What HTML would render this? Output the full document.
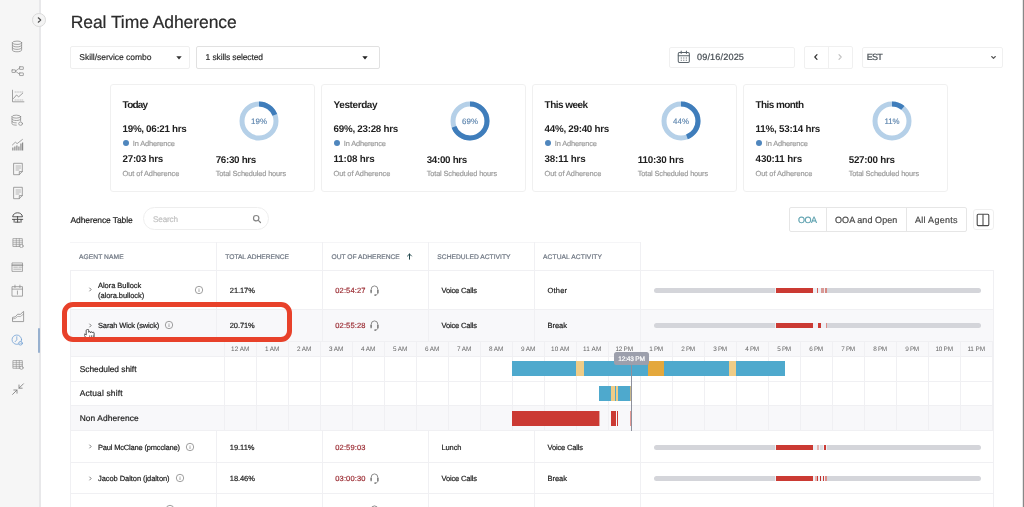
<!DOCTYPE html><html><head><meta charset="utf-8"><title>Real Time Adherence</title><style>
html,body{margin:0;padding:0;background:#fff;}
body{width:1024px;height:507px;overflow:hidden;position:relative;font-family:"Liberation Sans", Arial, sans-serif;text-rendering:geometricPrecision;}
#r{position:absolute;left:0;top:0;width:1024px;height:507px;overflow:hidden;will-change:transform;}
#r div,#r span,#r svg{position:absolute;box-sizing:border-box;}
#r span{white-space:nowrap;line-height:1;-webkit-text-stroke:0.2px;}
</style></head><body><div id="r">
<div style="left:0px;top:0px;width:40px;height:507px;background:#f6f6f6;"></div>
<div style="left:39px;top:0px;width:2px;height:507px;background:#e8e8ea;"></div>
<div style="left:38px;top:328px;width:2px;height:24.6px;background:#98b1cf;border-radius:1px;"></div>
<div style="left:32.2px;top:13px;width:13.6px;height:13.6px;border-radius:50%;background:#f4f4f4;border:0.7px solid #d9d9d9;"></div>
<svg style="left:36px;top:16px" width="7" height="8" viewBox="0 0 7 8"><path d="M2.300 1.800 L4.700 4 L2.300 6.200" fill="none" stroke="#4a4a4a" stroke-width="1.200" stroke-linecap="round" stroke-linejoin="round"/></svg>
<svg style="left:9.90px;top:40.36px" width="14.00" height="12.88" viewBox="0 0 14 14" preserveAspectRatio="none" fill="none" stroke="#8a8a8a" stroke-width="0.8" stroke-linecap="round" stroke-linejoin="round"><ellipse cx="7" cy="3" rx="4.6" ry="1.8"/><path d="M2.4 3v8c0 1 2 1.8 4.6 1.8s4.6-.8 4.6-1.8V3"/><path d="M2.4 5.7c0 1 2 1.8 4.6 1.8s4.6-.8 4.6-1.8M2.4 8.4c0 1 2 1.8 4.6 1.8s4.6-.8 4.6-1.8"/></svg>
<svg style="left:10.85px;top:64.84px" width="13.30" height="12.32" viewBox="0 0 14 14" preserveAspectRatio="none" fill="none" stroke="#8a8a8a" stroke-width="0.8" stroke-linecap="round" stroke-linejoin="round"><rect x="1" y="5.5" width="3.6" height="3" rx=".3"/><rect x="9" y="2" width="4" height="3" rx=".3"/><rect x="9" y="9" width="4" height="3" rx=".3"/><path d="M4.6 7 L9 3.5 M4.6 7 L9 10.5"/></svg>
<svg style="left:10.50px;top:88.60px" width="14.00" height="14.00" viewBox="0 0 14 14" preserveAspectRatio="none" fill="none" stroke="#8a8a8a" stroke-width="0.8" stroke-linecap="round" stroke-linejoin="round"><path d="M1.5 1.2v11.6h11.4"/><path d="M2.5 9.5l3-3.5 2.2 1.8 4-3.6"/><path d="M4 11h8M4 3h8" stroke-dasharray=".6 1.2" stroke-width=".5"/></svg>
<svg style="left:10.20px;top:114.14px" width="14.00" height="12.32" viewBox="0 0 14 14" preserveAspectRatio="none" fill="none" stroke="#8a8a8a" stroke-width="0.8" stroke-linecap="round" stroke-linejoin="round"><ellipse cx="6.3" cy="3" rx="4.3" ry="1.7"/><path d="M2 3v8c0 1 1.9 1.7 4.3 1.7M10.6 3v5"/><path d="M2 5.7c0 1 1.9 1.7 4.3 1.7s4.3-.7 4.3-1.7M2 8.4c0 1 1.9 1.7 4.3 1.7"/><circle cx="10.6" cy="11" r="1.9"/></svg>
<svg style="left:10.86px;top:137.60px" width="12.88" height="14.00" viewBox="0 0 14 14" preserveAspectRatio="none" fill="none" stroke="#8a8a8a" stroke-width="0.8" stroke-linecap="round" stroke-linejoin="round"><path d="M2 12.5v-3M4.2 12.5v-4M6.4 12.5v-5M8.6 12.5v-4M10.8 12.5v-7M12.6 12.5v-8" stroke-width="1.3" stroke-linecap="butt"/><path d="M1.5 7l3.2-2.8 2 1.4 5.8-4.2"/></svg>
<svg style="left:10.50px;top:162.20px" width="14.00" height="14.00" viewBox="0 0 14 14" preserveAspectRatio="none" fill="none" stroke="#8a8a8a" stroke-width="0.8" stroke-linecap="round" stroke-linejoin="round"><path d="M3 1.3h8.3v8.2l-3 3.2H3z"/><path d="M8.3 12.5V9.6h3"/><path d="M5 4h4.5M5 6h4.5M5 8h3" stroke-width=".6"/></svg>
<svg style="left:10.50px;top:186.30px" width="14.00" height="14.00" viewBox="0 0 14 14" preserveAspectRatio="none" fill="none" stroke="#8a8a8a" stroke-width="0.8" stroke-linecap="round" stroke-linejoin="round"><path d="M3 1.3h8.3v8.2l-3 3.2H3z"/><path d="M8.3 12.5V9.6h3"/><path d="M5 4h4.5M5 6h4.5M5 8h3" stroke-width=".6"/></svg>
<svg style="left:10.62px;top:211.30px" width="13.16" height="12.60" viewBox="0 0 14 14" preserveAspectRatio="none" fill="none" stroke="#4a4a4a" stroke-width="1.0" stroke-linecap="round" stroke-linejoin="round"><path d="M1.8 6c.4-2.6 2.6-4 5.2-4s4.8 1.4 5.2 4z"/><path d="M7 6v6.3M1.5 9.3h11M3.3 9.3v3.2M10.7 9.3v3.2M4.5 12.4h5"/></svg>
<svg style="left:11.78px;top:236.56px" width="12.04" height="11.48" viewBox="0 0 14 14" preserveAspectRatio="none" fill="none" stroke="#8a8a8a" stroke-width="0.8" stroke-linecap="round" stroke-linejoin="round"><rect x="1.5" y="2" width="10.5" height="9.6"/><path d="M1.5 4.6h10.5M1.5 7h10.5M1.5 9.3h10.5M5 2v9.6M8.5 2v9.6" stroke-width=".7"/><circle cx="11" cy="11" r="2" fill="#f6f6f6"/></svg>
<svg style="left:11.06px;top:260.64px" width="12.88" height="12.32" viewBox="0 0 14 14" preserveAspectRatio="none" fill="none" stroke="#8a8a8a" stroke-width="0.8" stroke-linecap="round" stroke-linejoin="round"><rect x="1.5" y="2.2" width="11" height="9.6"/><path d="M1.5 4.7h11" stroke-width="1.6"/><path d="M3 7h4M3 9.3h8" stroke-width=".7"/><path d="M8.5 7h3" stroke-width=".7"/></svg>
<svg style="left:11.06px;top:283.75px" width="12.88" height="13.30" viewBox="0 0 14 14" preserveAspectRatio="none" fill="none" stroke="#8a8a8a" stroke-width="0.8" stroke-linecap="round" stroke-linejoin="round"><rect x="1.5" y="2.8" width="11" height="10"/><path d="M1.5 5.4h11M4.3 1.2v2.6M9.7 1.2v2.6M7 7.3v3.5"/></svg>
<svg style="left:10.50px;top:309.00px" width="14.00" height="14.00" viewBox="0 0 14 14" preserveAspectRatio="none" fill="none" stroke="#8a8a8a" stroke-width="0.8" stroke-linecap="round" stroke-linejoin="round"><path d="M1.5 12.2V8.4l2.8-.6 2.4-2.6 2.6.2 3.3-3v9.8z"/><path d="M1.5 10l2.8-.6 2.4-2 2.6.2 3.3-2.6" stroke-width=".6"/></svg>
<svg style="left:11.34px;top:334.38px" width="12.32" height="12.04" viewBox="0 0 14 14" preserveAspectRatio="none" fill="none" stroke="#6f9fd3" stroke-width="0.9" stroke-linecap="round" stroke-linejoin="round"><circle cx="6.6" cy="6.6" r="5.4"/><path d="M6.6 3.2v3.6L4.6 9"/><circle cx="10.8" cy="10.8" r="2.1" fill="#f6f6f6"/><path d="M10 10.8h1.6" stroke-width=".6"/></svg>
<svg style="left:11.78px;top:359.10px" width="12.04" height="11.20" viewBox="0 0 14 14" preserveAspectRatio="none" fill="none" stroke="#8a8a8a" stroke-width="0.8" stroke-linecap="round" stroke-linejoin="round"><rect x="1.5" y="2" width="10.5" height="9.6"/><path d="M1.5 4.6h10.5M1.5 7h10.5M1.5 9.3h10.5M5 2v9.6M8.5 2v9.6" stroke-width=".7"/><circle cx="11" cy="11" r="2" fill="#f6f6f6"/></svg>
<svg style="left:10.50px;top:382.30px" width="14.00" height="14.00" viewBox="0 0 14 14" preserveAspectRatio="none" fill="none" stroke="#777" stroke-width="0.8" stroke-linecap="round" stroke-linejoin="round"><path d="M12.4 1.8L8 6.2M8 3v3.2h3.2M1.6 12.4L6 8M6 11.2V8H2.8"/></svg>
<div style="left:70px;top:45.5px;width:120px;height:23px;border:1px solid #efefef;border-radius:2px;background:#fff;"></div>
<svg style="left:176px;top:55.5px" width="6" height="4" viewBox="0 0 6 4"><path d="M0.3 0.3h5.4L3 3.5z" fill="#333"/></svg>
<div style="left:196px;top:45.5px;width:184px;height:23px;border:1px solid #e1e1e1;border-radius:2px;background:#fff;"></div>
<svg style="left:361.5px;top:56px" width="6" height="4" viewBox="0 0 6 4"><path d="M0.3 0.3h5.4L3 3.5z" fill="#222"/></svg>
<div style="left:669px;top:47px;width:125.5px;height:20.5px;border:1px solid #f0f0f0;border-radius:2px;background:#fff;"></div>
<svg style="left:676.8px;top:50.4px" width="13.6" height="13.8" viewBox="0 0 13 14" preserveAspectRatio="none" fill="none" stroke="#5a646b" stroke-width="1" stroke-linejoin="round"><rect x="1.2" y="2.6" width="10.6" height="10" rx="1.2"/><path d="M1.2 5.8h10.6M4 1v2.6M9 1v2.6" stroke-linecap="round"/><path d="M3.6 8.2h1M6 8.2h1M8.4 8.2h1M3.6 10.4h1M6 10.4h1M8.4 10.4h1" stroke-width="1"/></svg>
<div style="left:804px;top:46px;width:48.5px;height:22.5px;border:1px solid #f0f0f0;border-radius:2px;background:#fff;"></div>
<div style="left:828px;top:46px;width:1px;height:22.5px;background:#f0f0f0;"></div>
<svg style="left:813px;top:53.2px" width="6" height="8" viewBox="0 0 6 8"><path d="M4 1.6L1.8 4l2.2 2.4" fill="none" stroke="#333" stroke-width="1.2" stroke-linecap="round" stroke-linejoin="round"/></svg>
<svg style="left:837px;top:53.2px" width="6" height="8" viewBox="0 0 6 8"><path d="M2 1.6L4.2 4 2 6.400" fill="none" stroke="#c4c4c4" stroke-width="1.2" stroke-linecap="round" stroke-linejoin="round"/></svg>
<div style="left:862px;top:47px;width:141px;height:20.5px;border:1px solid #f0f0f0;border-radius:2px;background:#fff;"></div>
<svg style="left:989.5px;top:55px" width="7" height="5" viewBox="0 0 7 5"><path d="M1.700 1.500L3.5 3.300 5.300 1.500" fill="none" stroke="#555" stroke-width="1.1" stroke-linecap="round" stroke-linejoin="round"/></svg>
<div style="left:110px;top:84px;width:205px;height:107.6px;border:1px solid #f0f0f0;border-radius:3px;background:#fff;"></div>
<div style="left:122.89999999999999px;top:140px;width:6px;height:6px;border-radius:50%;background:#4f86bd;"></div>
<svg style="left:239.2px;top:101.1px" width="40" height="40" viewBox="-20 -20 40 40"><circle r="17" fill="none" stroke="#b5d0e8" stroke-width="5"/><circle r="17" fill="none" stroke="#3f7dbb" stroke-width="5" stroke-dasharray="20.29 106.81" transform="rotate(-90)"/><text x="0" y="2.7" text-anchor="middle" font-family="Liberation Sans, Arial, sans-serif" font-size="7.9" stroke="#5c84ad" stroke-width="0.15" fill="#5c84ad">19%</text></svg>
<div style="left:321px;top:84px;width:205px;height:107.6px;border:1px solid #f0f0f0;border-radius:3px;background:#fff;"></div>
<div style="left:333.90000000000003px;top:140px;width:6px;height:6px;border-radius:50%;background:#4f86bd;"></div>
<svg style="left:450.2px;top:101.1px" width="40" height="40" viewBox="-20 -20 40 40"><circle r="17" fill="none" stroke="#b5d0e8" stroke-width="5"/><circle r="17" fill="none" stroke="#3f7dbb" stroke-width="5" stroke-dasharray="73.70 106.81" transform="rotate(-90)"/><text x="0" y="2.7" text-anchor="middle" font-family="Liberation Sans, Arial, sans-serif" font-size="7.9" stroke="#5c84ad" stroke-width="0.15" fill="#5c84ad">69%</text></svg>
<div style="left:532px;top:84px;width:205px;height:107.6px;border:1px solid #f0f0f0;border-radius:3px;background:#fff;"></div>
<div style="left:544.9px;top:140px;width:6px;height:6px;border-radius:50%;background:#4f86bd;"></div>
<svg style="left:661.2px;top:101.1px" width="40" height="40" viewBox="-20 -20 40 40"><circle r="17" fill="none" stroke="#b5d0e8" stroke-width="5"/><circle r="17" fill="none" stroke="#3f7dbb" stroke-width="5" stroke-dasharray="47.00 106.81" transform="rotate(-90)"/><text x="0" y="2.7" text-anchor="middle" font-family="Liberation Sans, Arial, sans-serif" font-size="7.9" stroke="#5c84ad" stroke-width="0.15" fill="#5c84ad">44%</text></svg>
<div style="left:743px;top:84px;width:205px;height:107.6px;border:1px solid #f0f0f0;border-radius:3px;background:#fff;"></div>
<div style="left:755.9px;top:140px;width:6px;height:6px;border-radius:50%;background:#4f86bd;"></div>
<svg style="left:872.2px;top:101.1px" width="40" height="40" viewBox="-20 -20 40 40"><circle r="17" fill="none" stroke="#b5d0e8" stroke-width="5"/><circle r="17" fill="none" stroke="#3f7dbb" stroke-width="5" stroke-dasharray="11.75 106.81" transform="rotate(-90)"/><text x="0" y="2.7" text-anchor="middle" font-family="Liberation Sans, Arial, sans-serif" font-size="7.9" stroke="#5c84ad" stroke-width="0.15" fill="#5c84ad">11%</text></svg>
<div style="left:143.4px;top:207px;width:125.4px;height:23px;border:1px solid #eeeeee;border-radius:11.4px;background:#fff;"></div>
<svg style="left:251.5px;top:213.5px" width="10" height="10" viewBox="0 0 10 10" fill="none" stroke="#858585" stroke-width="1.200" stroke-linecap="round"><circle cx="4.200" cy="4.200" r="2.700"/><path d="M6.300 6.300L8.500 8.500"/></svg>
<div style="left:789.4px;top:207px;width:177.4px;height:25px;border:1px solid #e6e6e6;border-radius:2px;background:#fff;"></div>
<div style="left:826px;top:207px;width:1px;height:25px;background:#e6e6e6;"></div>
<div style="left:906.2px;top:207px;width:1px;height:25px;background:#e6e6e6;"></div>
<div style="left:972.5px;top:208.5px;width:21px;height:21.2px;border:1px solid #efefef;border-radius:3px;background:#fff;"></div>
<svg style="left:976px;top:212.5px" width="14" height="14" viewBox="0 0 14 14" fill="none" stroke="#4a4a4a" stroke-width="1.1"><rect x="1.2" y="1.2" width="11.6" height="11.4" rx="1"/><path d="M7 1.2v11.4"/></svg>
<div style="left:70px;top:241.5px;width:570.5px;height:1px;background:#f5f5f7;"></div>
<div style="left:70px;top:308.7px;width:923.5px;height:32.2px;background:#f8f8fa;"></div>
<div style="left:70px;top:341px;width:923.5px;height:15.5px;background:#f8f8fa;"></div>
<div style="left:70px;top:405.3px;width:923.5px;height:25.3px;background:#f8f8fa;"></div>
<div style="left:70px;top:269.7px;width:923.5px;height:1px;background:#f0f0f3;"></div>
<div style="left:70px;top:308.5px;width:923.5px;height:1px;background:#f0f0f3;"></div>
<div style="left:70px;top:340.7px;width:923.5px;height:1px;background:#f0f0f3;"></div>
<div style="left:70px;top:356.2px;width:923.5px;height:1px;background:#f0f0f3;"></div>
<div style="left:70px;top:380.5px;width:923.5px;height:1px;background:#f0f0f3;"></div>
<div style="left:70px;top:405.1px;width:923.5px;height:1px;background:#f0f0f3;"></div>
<div style="left:70px;top:430.4px;width:923.5px;height:1px;background:#f0f0f3;"></div>
<div style="left:70px;top:462px;width:923.5px;height:1px;background:#f0f0f3;"></div>
<div style="left:70px;top:493.3px;width:923.5px;height:1px;background:#f0f0f3;"></div>
<div style="left:70px;top:270px;width:1px;height:237px;background:#f0f0f3;"></div>
<div style="left:993.0px;top:270px;width:1px;height:237px;background:#f0f0f3;"></div>
<div style="left:216.0px;top:242px;width:1px;height:99px;background:#f0f0f3;"></div>
<div style="left:216.0px;top:431px;width:1px;height:76px;background:#f0f0f3;"></div>
<div style="left:322.0px;top:242px;width:1px;height:99px;background:#f0f0f3;"></div>
<div style="left:322.0px;top:431px;width:1px;height:76px;background:#f0f0f3;"></div>
<div style="left:428.0px;top:242px;width:1px;height:99px;background:#f0f0f3;"></div>
<div style="left:428.0px;top:431px;width:1px;height:76px;background:#f0f0f3;"></div>
<div style="left:534.0px;top:242px;width:1px;height:99px;background:#f0f0f3;"></div>
<div style="left:534.0px;top:431px;width:1px;height:76px;background:#f0f0f3;"></div>
<div style="left:640.0px;top:242px;width:1px;height:99px;background:#f0f0f3;"></div>
<div style="left:640.0px;top:431px;width:1px;height:76px;background:#f0f0f3;"></div>
<div style="left:223.5px;top:341px;width:1px;height:89.5px;background:#f0f0f3;"></div>
<div style="left:255.5px;top:341px;width:1px;height:89.5px;background:#f0f0f3;"></div>
<div style="left:287.5px;top:341px;width:1px;height:89.5px;background:#f0f0f3;"></div>
<div style="left:319.5px;top:341px;width:1px;height:89.5px;background:#f0f0f3;"></div>
<div style="left:351.5px;top:341px;width:1px;height:89.5px;background:#f0f0f3;"></div>
<div style="left:383.5px;top:341px;width:1px;height:89.5px;background:#f0f0f3;"></div>
<div style="left:415.5px;top:341px;width:1px;height:89.5px;background:#f0f0f3;"></div>
<div style="left:447.5px;top:341px;width:1px;height:89.5px;background:#f0f0f3;"></div>
<div style="left:479.5px;top:341px;width:1px;height:89.5px;background:#f0f0f3;"></div>
<div style="left:511.5px;top:341px;width:1px;height:89.5px;background:#f0f0f3;"></div>
<div style="left:543.5px;top:341px;width:1px;height:89.5px;background:#f0f0f3;"></div>
<div style="left:575.5px;top:341px;width:1px;height:89.5px;background:#f0f0f3;"></div>
<div style="left:607.5px;top:341px;width:1px;height:89.5px;background:#f0f0f3;"></div>
<div style="left:639.5px;top:341px;width:1px;height:89.5px;background:#f0f0f3;"></div>
<div style="left:671.5px;top:341px;width:1px;height:89.5px;background:#f0f0f3;"></div>
<div style="left:703.5px;top:341px;width:1px;height:89.5px;background:#f0f0f3;"></div>
<div style="left:735.5px;top:341px;width:1px;height:89.5px;background:#f0f0f3;"></div>
<div style="left:767.5px;top:341px;width:1px;height:89.5px;background:#f0f0f3;"></div>
<div style="left:799.5px;top:341px;width:1px;height:89.5px;background:#f0f0f3;"></div>
<div style="left:831.5px;top:341px;width:1px;height:89.5px;background:#f0f0f3;"></div>
<div style="left:863.5px;top:341px;width:1px;height:89.5px;background:#f0f0f3;"></div>
<div style="left:895.5px;top:341px;width:1px;height:89.5px;background:#f0f0f3;"></div>
<div style="left:927.5px;top:341px;width:1px;height:89.5px;background:#f0f0f3;"></div>
<div style="left:959.5px;top:341px;width:1px;height:89.5px;background:#f0f0f3;"></div>
<div style="left:991.5px;top:341px;width:1px;height:89.5px;background:#f0f0f3;"></div>
<svg style="left:406px;top:253px" width="7" height="7" viewBox="0 0 7 7" fill="none" stroke="#23484d" stroke-width="1" stroke-linecap="round" stroke-linejoin="round"><path d="M3.5 6.2V1M1.5 3L3.5 1l2 2"/></svg>
<svg style="left:87.89999999999999px;top:286.4px" width="5" height="7" viewBox="0 0 5 7"><path d="M1.700 2L3.100 3.500 1.700 5" fill="none" stroke="#7c7c7c" stroke-width="1" stroke-linecap="round" stroke-linejoin="round"/></svg>
<svg style="left:194px;top:284.9px" width="10" height="10" viewBox="0 0 10 10" fill="none" stroke="#808080" stroke-width=".75"><circle cx="5" cy="5" r="3.7"/><path d="M5 4.6v2" stroke-linecap="round" stroke-width=".7"/><circle cx="5" cy="3.3" r=".35" fill="#808080" stroke="none"/></svg>
<svg style="left:368.9px;top:285.1px" width="11" height="11" viewBox="0 0 11 11" fill="none" stroke="#6a6a6a" stroke-width=".75" stroke-linecap="round"><path d="M2.1 6.3V4.800a3.400 3.900 0 0 1 6.800 0v1.500"/><path d="M2.1 5.400v2.300M8.900 5.400v2.300" stroke-width="1.200"/><path d="M8.900 7.700c0 1.400-.9 2.300-2.500 2.400"/><path d="M5.600 10.100h1.100" stroke-width="1"/></svg>
<div style="left:653.5px;top:287.6px;width:327px;height:5px;background:#d4d5da;border-radius:2.5px;"></div>
<div style="left:774.9px;top:287.6px;width:52.39999999999998px;height:5px;background:#eef0f5;"></div>
<div style="left:775.9px;top:287.6px;width:37.39999999999998px;height:5px;background:#cb3a33;"></div>
<div style="left:816.6px;top:287.6px;width:1.3999999999999773px;height:5px;background:#d4625c;"></div>
<div style="left:820.9px;top:287.6px;width:2.7000000000000455px;height:5px;background:#d99b97;"></div>
<div style="left:825px;top:287.6px;width:1.8999999999999773px;height:5px;background:#d68781;"></div>
<svg style="left:87.89999999999999px;top:321.59999999999997px" width="5" height="7" viewBox="0 0 5 7"><path d="M1.700 2L3.100 3.500 1.700 5" fill="none" stroke="#7c7c7c" stroke-width="1" stroke-linecap="round" stroke-linejoin="round"/></svg>
<svg style="left:164px;top:320.09999999999997px" width="10" height="10" viewBox="0 0 10 10" fill="none" stroke="#808080" stroke-width=".75"><circle cx="5" cy="5" r="3.7"/><path d="M5 4.6v2" stroke-linecap="round" stroke-width=".7"/><circle cx="5" cy="3.3" r=".35" fill="#808080" stroke="none"/></svg>
<svg style="left:368.9px;top:320.3px" width="11" height="11" viewBox="0 0 11 11" fill="none" stroke="#6a6a6a" stroke-width=".75" stroke-linecap="round"><path d="M2.1 6.3V4.800a3.400 3.900 0 0 1 6.800 0v1.500"/><path d="M2.1 5.400v2.300M8.900 5.400v2.300" stroke-width="1.200"/><path d="M8.900 7.700c0 1.400-.9 2.300-2.500 2.400"/><path d="M5.600 10.100h1.100" stroke-width="1"/></svg>
<div style="left:653.5px;top:322.8px;width:327px;height:5px;background:#d4d5da;border-radius:2.5px;"></div>
<div style="left:774.9px;top:322.8px;width:52.39999999999998px;height:5px;background:#eef0f5;"></div>
<div style="left:775.9px;top:322.8px;width:37.39999999999998px;height:5px;background:#cb3a33;"></div>
<div style="left:817.9px;top:322.8px;width:3.0px;height:5px;background:#cb3a33;"></div>
<div style="left:825.8px;top:322.8px;width:0.900000000000091px;height:5px;background:#dd8f8a;"></div>
<svg style="left:87.89999999999999px;top:443.29999999999995px" width="5" height="7" viewBox="0 0 5 7"><path d="M1.700 2L3.100 3.500 1.700 5" fill="none" stroke="#7c7c7c" stroke-width="1" stroke-linecap="round" stroke-linejoin="round"/></svg>
<svg style="left:185px;top:441.79999999999995px" width="10" height="10" viewBox="0 0 10 10" fill="none" stroke="#808080" stroke-width=".75"><circle cx="5" cy="5" r="3.7"/><path d="M5 4.6v2" stroke-linecap="round" stroke-width=".7"/><circle cx="5" cy="3.3" r=".35" fill="#808080" stroke="none"/></svg>
<div style="left:653.5px;top:444.5px;width:327px;height:5px;background:#d4d5da;border-radius:2.5px;"></div>
<div style="left:774.9px;top:444.5px;width:52.39999999999998px;height:5px;background:#eef0f5;"></div>
<div style="left:775.9px;top:444.5px;width:37.39999999999998px;height:5px;background:#cb3a33;"></div>
<div style="left:817.1px;top:444.5px;width:1.6999999999999318px;height:5px;background:#e6b5b2;"></div>
<div style="left:819.5px;top:444.5px;width:3.1000000000000227px;height:5px;background:#dcdde2;"></div>
<div style="left:823.6px;top:444.5px;width:2.699999999999932px;height:5px;background:#cb3a33;"></div>
<svg style="left:87.89999999999999px;top:474.59999999999997px" width="5" height="7" viewBox="0 0 5 7"><path d="M1.700 2L3.100 3.500 1.700 5" fill="none" stroke="#7c7c7c" stroke-width="1" stroke-linecap="round" stroke-linejoin="round"/></svg>
<svg style="left:174.6px;top:473.09999999999997px" width="10" height="10" viewBox="0 0 10 10" fill="none" stroke="#808080" stroke-width=".75"><circle cx="5" cy="5" r="3.7"/><path d="M5 4.6v2" stroke-linecap="round" stroke-width=".7"/><circle cx="5" cy="3.3" r=".35" fill="#808080" stroke="none"/></svg>
<svg style="left:368.9px;top:473.3px" width="11" height="11" viewBox="0 0 11 11" fill="none" stroke="#6a6a6a" stroke-width=".75" stroke-linecap="round"><path d="M2.1 6.3V4.800a3.400 3.900 0 0 1 6.800 0v1.500"/><path d="M2.1 5.400v2.300M8.900 5.400v2.300" stroke-width="1.200"/><path d="M8.900 7.700c0 1.400-.9 2.300-2.500 2.400"/><path d="M5.600 10.100h1.100" stroke-width="1"/></svg>
<div style="left:653.5px;top:475.8px;width:327px;height:5px;background:#d4d5da;border-radius:2.5px;"></div>
<div style="left:774.9px;top:475.8px;width:52.39999999999998px;height:5px;background:#eef0f5;"></div>
<div style="left:775.9px;top:475.8px;width:37.30000000000007px;height:5px;background:#cb3a33;"></div>
<div style="left:815.2px;top:475.8px;width:1.3999999999999773px;height:5px;background:#e6b5b2;"></div>
<div style="left:816.9px;top:475.8px;width:1.3000000000000682px;height:5px;background:#cb3a33;"></div>
<div style="left:819.6px;top:475.8px;width:1.5px;height:5px;background:#b8322c;"></div>
<div style="left:823.1px;top:475.8px;width:0.8999999999999773px;height:5px;background:#cb3a33;"></div>
<div style="left:825px;top:475.8px;width:1.7000000000000455px;height:5px;background:#dd8f8a;"></div>
<svg style="left:87.89999999999999px;top:505.9px" width="5" height="7" viewBox="0 0 5 7"><path d="M1.700 2L3.100 3.500 1.700 5" fill="none" stroke="#7c7c7c" stroke-width="1" stroke-linecap="round" stroke-linejoin="round"/></svg>
<svg style="left:165px;top:504.4px" width="10" height="10" viewBox="0 0 10 10" fill="none" stroke="#808080" stroke-width=".75"><circle cx="5" cy="5" r="3.7"/><path d="M5 4.6v2" stroke-linecap="round" stroke-width=".7"/><circle cx="5" cy="3.3" r=".35" fill="#808080" stroke="none"/></svg>
<svg style="left:368.9px;top:504.5px" width="11" height="11" viewBox="0 0 11 11" fill="none" stroke="#6a6a6a" stroke-width=".75" stroke-linecap="round"><path d="M2.1 6.3V4.800a3.400 3.900 0 0 1 6.800 0v1.500"/><path d="M2.1 5.400v2.300M8.900 5.400v2.300" stroke-width="1.200"/><path d="M8.900 7.700c0 1.400-.9 2.300-2.500 2.400"/><path d="M5.600 10.100h1.100" stroke-width="1"/></svg>
<div style="left:512.3px;top:361.2px;width:272.70000000000005px;height:14.5px;background:#4ea9cd;"></div>
<div style="left:576.3px;top:361.2px;width:8.100000000000023px;height:14.5px;background:#efcc86;"></div>
<div style="left:648px;top:361.2px;width:16.200000000000045px;height:14.5px;background:#e4a83c;"></div>
<div style="left:728.6px;top:361.2px;width:7.699999999999932px;height:14.5px;background:#efcc86;"></div>
<div style="left:598.8px;top:386px;width:31.800000000000068px;height:15px;background:#4ea9cd;"></div>
<div style="left:611.1px;top:386px;width:3.699999999999932px;height:15px;background:#efcc86;"></div>
<div style="left:616px;top:386px;width:2px;height:15px;background:#efcc86;"></div>
<div style="left:630px;top:386px;width:1px;height:15px;background:#c9b98c;"></div>
<div style="left:512.3px;top:410.7px;width:86.40000000000009px;height:15px;background:#cb3a33;"></div>
<div style="left:598.7px;top:410.7px;width:0.7999999999999545px;height:15px;background:#e3a9a5;"></div>
<div style="left:611.1px;top:410.7px;width:4.5px;height:15px;background:#cb3a33;"></div>
<div style="left:617px;top:410.7px;width:1.3999999999999773px;height:15px;background:#cb3a33;"></div>
<div style="left:629.6px;top:410.7px;width:1.3999999999999773px;height:15px;background:#e59a95;"></div>
<div style="left:631px;top:364px;width:1px;height:66.5px;background:#8d909c;"></div>
<div style="left:613.7px;top:352.2px;width:35.6px;height:12.8px;background:#9c9fac;border-radius:2.5px;"></div>
<span id="t0" style="left:70.7px;top:14.00px;font-size:17.5px;font-weight:400;color:#2b2b2b;letter-spacing:-0.068px;">Real Time Adherence</span>
<span id="t1" style="left:79.3px;top:53.00px;font-size:8.5px;font-weight:400;color:#2f2f2f;letter-spacing:-0.031px;">Skill/service combo</span>
<span id="t2" style="left:205.6px;top:53.00px;font-size:8.5px;font-weight:400;color:#2f2f2f;letter-spacing:-0.133px;">1 skills selected</span>
<span id="t3" style="left:697px;top:53.00px;font-size:9.1px;font-weight:400;color:#454c52;letter-spacing:0.154px;">09/16/2025</span>
<span id="t4" style="left:866.7px;top:53.00px;font-size:9.1px;font-weight:400;color:#454c52;letter-spacing:-0.794px;">EST</span>
<span id="t5" style="left:122.6px;top:101.00px;font-size:10px;font-weight:700;color:#1f1f1f;letter-spacing:-0.780px;-webkit-text-stroke:0;">Today</span>
<span id="t6" style="left:122.6px;top:125.00px;font-size:9.8px;font-weight:700;color:#1f1f1f;letter-spacing:-0.306px;-webkit-text-stroke:0;">19%, 06:21 hrs</span>
<span id="t7" style="left:132.79999999999998px;top:140.00px;font-size:7.4px;font-weight:400;color:#9c9c9c;letter-spacing:-0.133px;">In Adherence</span>
<span id="t8" style="left:122.6px;top:155.00px;font-size:9.8px;font-weight:700;color:#1f1f1f;letter-spacing:-0.304px;-webkit-text-stroke:0;">27:03 hrs</span>
<span id="t9" style="left:122.6px;top:170.00px;font-size:7.4px;font-weight:400;color:#9c9c9c;letter-spacing:-0.055px;">Out of Adherence</span>
<span id="t10" style="left:215.7px;top:156.00px;font-size:9.8px;font-weight:700;color:#1f1f1f;letter-spacing:-0.304px;-webkit-text-stroke:0;">76:30 hrs</span>
<span id="t11" style="left:215.7px;top:170.00px;font-size:7.4px;font-weight:400;color:#9c9c9c;letter-spacing:-0.137px;">Total Scheduled hours</span>
<span id="t12" style="left:333.6px;top:101.00px;font-size:10px;font-weight:700;color:#1f1f1f;letter-spacing:-0.408px;-webkit-text-stroke:0;">Yesterday</span>
<span id="t13" style="left:333.6px;top:125.00px;font-size:9.8px;font-weight:700;color:#1f1f1f;letter-spacing:-0.268px;-webkit-text-stroke:0;">69%, 23:28 hrs</span>
<span id="t14" style="left:343.8px;top:140.00px;font-size:7.4px;font-weight:400;color:#9c9c9c;letter-spacing:-0.133px;">In Adherence</span>
<span id="t15" style="left:333.6px;top:155.00px;font-size:9.8px;font-weight:700;color:#1f1f1f;letter-spacing:-0.186px;-webkit-text-stroke:0;">11:08 hrs</span>
<span id="t16" style="left:333.6px;top:170.00px;font-size:7.4px;font-weight:400;color:#9c9c9c;letter-spacing:-0.055px;">Out of Adherence</span>
<span id="t17" style="left:426.7px;top:156.00px;font-size:9.8px;font-weight:700;color:#1f1f1f;letter-spacing:-0.304px;-webkit-text-stroke:0;">34:00 hrs</span>
<span id="t18" style="left:426.7px;top:170.00px;font-size:7.4px;font-weight:400;color:#9c9c9c;letter-spacing:-0.137px;">Total Scheduled hours</span>
<span id="t19" style="left:544.6px;top:101.00px;font-size:10px;font-weight:700;color:#1f1f1f;letter-spacing:-0.527px;-webkit-text-stroke:0;">This week</span>
<span id="t20" style="left:544.6px;top:125.00px;font-size:9.8px;font-weight:700;color:#1f1f1f;letter-spacing:-0.268px;-webkit-text-stroke:0;">44%, 29:40 hrs</span>
<span id="t21" style="left:554.8000000000001px;top:140.00px;font-size:7.4px;font-weight:400;color:#9c9c9c;letter-spacing:-0.133px;">In Adherence</span>
<span id="t22" style="left:544.6px;top:155.00px;font-size:9.8px;font-weight:700;color:#1f1f1f;letter-spacing:-0.186px;-webkit-text-stroke:0;">38:11 hrs</span>
<span id="t23" style="left:544.6px;top:170.00px;font-size:7.4px;font-weight:400;color:#9c9c9c;letter-spacing:-0.055px;">Out of Adherence</span>
<span id="t24" style="left:637.7px;top:156.00px;font-size:9.8px;font-weight:700;color:#1f1f1f;letter-spacing:-0.182px;-webkit-text-stroke:0;">110:30 hrs</span>
<span id="t25" style="left:637.7px;top:170.00px;font-size:7.4px;font-weight:400;color:#9c9c9c;letter-spacing:-0.137px;">Total Scheduled hours</span>
<span id="t26" style="left:755.6px;top:101.00px;font-size:10px;font-weight:700;color:#1f1f1f;letter-spacing:-0.599px;-webkit-text-stroke:0;">This month</span>
<span id="t27" style="left:755.6px;top:125.00px;font-size:9.8px;font-weight:700;color:#1f1f1f;letter-spacing:-0.227px;-webkit-text-stroke:0;">11%, 53:14 hrs</span>
<span id="t28" style="left:765.8000000000001px;top:140.00px;font-size:7.4px;font-weight:400;color:#9c9c9c;letter-spacing:-0.133px;">In Adherence</span>
<span id="t29" style="left:755.6px;top:155.00px;font-size:9.8px;font-weight:700;color:#1f1f1f;letter-spacing:-0.160px;-webkit-text-stroke:0;">430:11 hrs</span>
<span id="t30" style="left:755.6px;top:170.00px;font-size:7.4px;font-weight:400;color:#9c9c9c;letter-spacing:-0.055px;">Out of Adherence</span>
<span id="t31" style="left:848.7px;top:156.00px;font-size:9.8px;font-weight:700;color:#1f1f1f;letter-spacing:-0.243px;-webkit-text-stroke:0;">527:00 hrs</span>
<span id="t32" style="left:848.7px;top:170.00px;font-size:7.4px;font-weight:400;color:#9c9c9c;letter-spacing:-0.137px;">Total Scheduled hours</span>
<span id="t33" style="left:70.5px;top:216.00px;font-size:8.5px;font-weight:400;color:#222;letter-spacing:-0.104px;">Adherence Table</span>
<span id="t34" style="left:153px;top:216.00px;font-size:8.2px;font-weight:400;color:#c2c2c2;letter-spacing:-0.191px;">Search</span>
<span id="t35" style="left:798px;top:216.00px;font-size:9px;font-weight:400;color:#5a9fad;letter-spacing:-0.508px;">OOA</span>
<span id="t36" style="left:835px;top:216.00px;font-size:9px;font-weight:400;color:#484848;letter-spacing:0.068px;">OOA and Open</span>
<span id="t37" style="left:915px;top:216.00px;font-size:9px;font-weight:400;color:#484848;letter-spacing:0.274px;">All Agents</span>
<span id="t38" style="left:79px;top:255.00px;font-size:6.7px;font-weight:400;color:#6f7783;letter-spacing:0.055px;">AGENT NAME</span>
<span id="t39" style="left:225.3px;top:255.00px;font-size:6.7px;font-weight:400;color:#6f7783;letter-spacing:-0.034px;">TOTAL ADHERENCE</span>
<span id="t40" style="left:331.5px;top:255.00px;font-size:6.7px;font-weight:400;color:#6f7783;letter-spacing:-0.022px;">OUT OF ADHERENCE</span>
<span id="t41" style="left:437.3px;top:255.00px;font-size:6.7px;font-weight:400;color:#6f7783;letter-spacing:0.021px;">SCHEDULED ACTIVITY</span>
<span id="t42" style="left:543px;top:255.00px;font-size:6.7px;font-weight:400;color:#6f7783;letter-spacing:0.090px;">ACTUAL ACTIVITY</span>
<span id="t43" style="left:98px;top:282.00px;font-size:7.5px;font-weight:400;color:#222;letter-spacing:-0.040px;">Alora Bullock</span>
<span id="t44" style="left:98px;top:292.00px;font-size:7.5px;font-weight:400;color:#222;letter-spacing:-0.065px;">(alora.bullock)</span>
<span id="t45" style="left:229.8px;top:287.00px;font-size:7.5px;font-weight:400;color:#222;letter-spacing:-0.068px;">21.17%</span>
<span id="t46" style="left:335.3px;top:287.00px;font-size:7.5px;font-weight:400;color:#9b2c33;letter-spacing:0.128px;">02:54:27</span>
<span id="t47" style="left:441.5px;top:287.00px;font-size:7.5px;font-weight:400;color:#222;letter-spacing:-0.161px;">Voice Calls</span>
<span id="t48" style="left:547.5px;top:287.00px;font-size:7.5px;font-weight:400;color:#222;letter-spacing:0.184px;">Other</span>
<span id="t49" style="left:98px;top:322.00px;font-size:7.5px;font-weight:400;color:#222;letter-spacing:-0.145px;">Sarah Wick (swick)</span>
<span id="t50" style="left:229.8px;top:322.00px;font-size:7.5px;font-weight:400;color:#222;letter-spacing:-0.108px;">20.71%</span>
<span id="t51" style="left:335.3px;top:322.00px;font-size:7.5px;font-weight:400;color:#9b2c33;letter-spacing:0.128px;">02:55:28</span>
<span id="t52" style="left:441.5px;top:322.00px;font-size:7.5px;font-weight:400;color:#222;letter-spacing:-0.161px;">Voice Calls</span>
<span id="t53" style="left:547.5px;top:322.00px;font-size:7.5px;font-weight:400;color:#222;letter-spacing:-0.023px;">Break</span>
<span id="t54" style="left:98px;top:444.00px;font-size:7.5px;font-weight:400;color:#222;letter-spacing:-0.176px;">Paul McClane (pmcclane)</span>
<span id="t55" style="left:229.8px;top:444.00px;font-size:7.5px;font-weight:400;color:#222;letter-spacing:-0.038px;">19.11%</span>
<span id="t56" style="left:335.3px;top:444.00px;font-size:7.5px;font-weight:400;color:#9b2c33;letter-spacing:0.128px;">02:59:03</span>
<span id="t57" style="left:441.5px;top:444.00px;font-size:7.5px;font-weight:400;color:#222;letter-spacing:-0.109px;">Lunch</span>
<span id="t58" style="left:547.5px;top:444.00px;font-size:7.5px;font-weight:400;color:#222;letter-spacing:-0.161px;">Voice Calls</span>
<span id="t59" style="left:98px;top:475.00px;font-size:7.5px;font-weight:400;color:#222;letter-spacing:-0.065px;">Jacob Dalton (jdalton)</span>
<span id="t60" style="left:229.8px;top:475.00px;font-size:7.5px;font-weight:400;color:#222;letter-spacing:-0.068px;">18.46%</span>
<span id="t61" style="left:335.3px;top:475.00px;font-size:7.5px;font-weight:400;color:#9b2c33;letter-spacing:0.128px;">03:00:30</span>
<span id="t62" style="left:441.5px;top:475.00px;font-size:7.5px;font-weight:400;color:#222;letter-spacing:-0.161px;">Voice Calls</span>
<span id="t63" style="left:547.5px;top:475.00px;font-size:7.5px;font-weight:400;color:#222;letter-spacing:-0.023px;">Break</span>
<span id="t64" style="left:231.1px;top:347.00px;font-size:6.4px;font-weight:400;color:#666;letter-spacing:0.019px;-webkit-text-stroke:0;">12 AM</span>
<span id="t65" style="left:264.95px;top:347.00px;font-size:6.4px;font-weight:400;color:#666;letter-spacing:-0.026px;-webkit-text-stroke:0;">1 AM</span>
<span id="t66" style="left:296.95px;top:347.00px;font-size:6.4px;font-weight:400;color:#666;letter-spacing:-0.026px;-webkit-text-stroke:0;">2 AM</span>
<span id="t67" style="left:328.95px;top:347.00px;font-size:6.4px;font-weight:400;color:#666;letter-spacing:-0.026px;-webkit-text-stroke:0;">3 AM</span>
<span id="t68" style="left:360.95px;top:347.00px;font-size:6.4px;font-weight:400;color:#666;letter-spacing:-0.026px;-webkit-text-stroke:0;">4 AM</span>
<span id="t69" style="left:392.95px;top:347.00px;font-size:6.4px;font-weight:400;color:#666;letter-spacing:-0.026px;-webkit-text-stroke:0;">5 AM</span>
<span id="t70" style="left:424.95px;top:347.00px;font-size:6.4px;font-weight:400;color:#666;letter-spacing:-0.026px;-webkit-text-stroke:0;">6 AM</span>
<span id="t71" style="left:456.95px;top:347.00px;font-size:6.4px;font-weight:400;color:#666;letter-spacing:-0.026px;-webkit-text-stroke:0;">7 AM</span>
<span id="t72" style="left:488.95px;top:347.00px;font-size:6.4px;font-weight:400;color:#666;letter-spacing:-0.026px;-webkit-text-stroke:0;">8 AM</span>
<span id="t73" style="left:520.95px;top:347.00px;font-size:6.4px;font-weight:400;color:#666;letter-spacing:-0.026px;-webkit-text-stroke:0;">9 AM</span>
<span id="t74" style="left:551.1px;top:347.00px;font-size:6.4px;font-weight:400;color:#666;letter-spacing:0.019px;-webkit-text-stroke:0;">10 AM</span>
<span id="t75" style="left:583.1px;top:347.00px;font-size:6.4px;font-weight:400;color:#666;letter-spacing:0.136px;-webkit-text-stroke:0;">11 AM</span>
<span id="t76" style="left:615.4000000000001px;top:347.00px;font-size:6.4px;font-weight:400;color:#666;letter-spacing:-0.221px;-webkit-text-stroke:0;">12 PM</span>
<span id="t77" style="left:649.25px;top:347.00px;font-size:6.4px;font-weight:400;color:#666;letter-spacing:-0.341px;-webkit-text-stroke:0;">1 PM</span>
<span id="t78" style="left:681.25px;top:347.00px;font-size:6.4px;font-weight:400;color:#666;letter-spacing:-0.341px;-webkit-text-stroke:0;">2 PM</span>
<span id="t79" style="left:713.25px;top:347.00px;font-size:6.4px;font-weight:400;color:#666;letter-spacing:-0.341px;-webkit-text-stroke:0;">3 PM</span>
<span id="t80" style="left:745.25px;top:347.00px;font-size:6.4px;font-weight:400;color:#666;letter-spacing:-0.341px;-webkit-text-stroke:0;">4 PM</span>
<span id="t81" style="left:777.25px;top:347.00px;font-size:6.4px;font-weight:400;color:#666;letter-spacing:-0.341px;-webkit-text-stroke:0;">5 PM</span>
<span id="t82" style="left:809.25px;top:347.00px;font-size:6.4px;font-weight:400;color:#666;letter-spacing:-0.341px;-webkit-text-stroke:0;">6 PM</span>
<span id="t83" style="left:841.25px;top:347.00px;font-size:6.4px;font-weight:400;color:#666;letter-spacing:-0.341px;-webkit-text-stroke:0;">7 PM</span>
<span id="t84" style="left:873.25px;top:347.00px;font-size:6.4px;font-weight:400;color:#666;letter-spacing:-0.341px;-webkit-text-stroke:0;">8 PM</span>
<span id="t85" style="left:905.25px;top:347.00px;font-size:6.4px;font-weight:400;color:#666;letter-spacing:-0.341px;-webkit-text-stroke:0;">9 PM</span>
<span id="t86" style="left:935.4000000000001px;top:347.00px;font-size:6.4px;font-weight:400;color:#666;letter-spacing:-0.221px;-webkit-text-stroke:0;">10 PM</span>
<span id="t87" style="left:967.4000000000001px;top:347.00px;font-size:6.4px;font-weight:400;color:#666;letter-spacing:-0.100px;-webkit-text-stroke:0;">11 PM</span>
<span id="t88" style="left:79.7px;top:365.00px;font-size:8.4px;font-weight:400;color:#222;letter-spacing:-0.034px;">Scheduled shift</span>
<span id="t89" style="left:79.7px;top:389.00px;font-size:8.4px;font-weight:400;color:#222;letter-spacing:0.166px;">Actual shift</span>
<span id="t90" style="left:79.7px;top:414.00px;font-size:8.4px;font-weight:400;color:#222;letter-spacing:0.096px;">Non Adherence</span>
<span id="t91" style="left:618.3px;top:357.00px;font-size:6.6px;font-weight:400;color:#ffffff;letter-spacing:-0.219px;">12:43 PM</span>
<svg style="left:84.2px;top:329.2px" width="12" height="10" viewBox="0 0 12 10"><path d="M3.1 0.600c-.6 0-.9.400-.9.900v4.600l-.8-.8c-.4-.4-1-.3-1.200 0-.3.400-.2.800.100 1.200l2 2.600h7.800v-5c0-.6-.4-.9-.9-.9-.4 0-.8.200-.9.600 0-.6-.4-1-.9-1-.5 0-.9.300-.9.800 0-.6-.4-1-1-1-.4 0-.8.300-.8.700v-2c0-.6-.3-1-.9-1z" fill="#fff" stroke="#2a2a2a" stroke-width=".8" stroke-linejoin="round"/><path d="M5.700 6.300v2M7.500 6.300v2M9.200 6.300v2" stroke="#2a2a2a" stroke-width=".6"/></svg>
<div style="left:62px;top:302px;width:230px;height:40px;border:5px solid #e8412a;border-radius:11px;"></div>
<div style="left:1022px;top:0;width:1px;height:507px;background:#e6e6e6;"></div>
<div style="left:1023px;top:0;width:1px;height:507px;background:#888888;"></div>
</div></body></html>
